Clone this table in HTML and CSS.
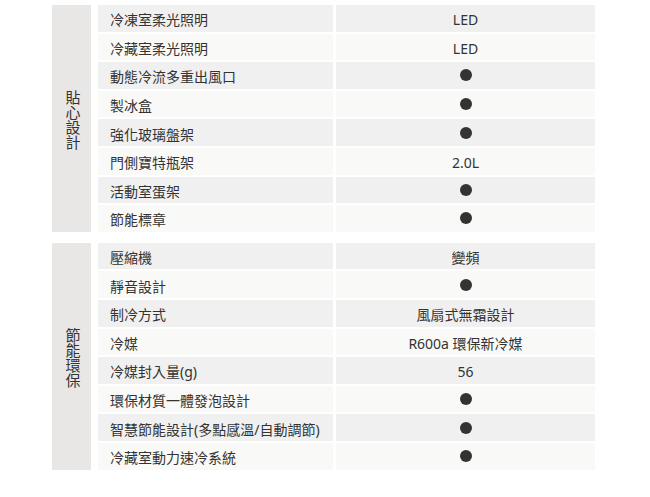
FILE: index.html
```html
<!DOCTYPE html>
<html lang="zh-Hant">
<head>
<meta charset="utf-8">
<link rel="stylesheet" href="styles.css">
</head>
<body>
<div class="spec">
  <section class="group">
    <div class="cat"><span>貼心設計</span></div>
    <div class="rows">
      <div class="row odd"><div class="name">冷凍室柔光照明</div><div class="val">LED</div></div>
      <div class="row even"><div class="name">冷藏室柔光照明</div><div class="val">LED</div></div>
      <div class="row odd"><div class="name">動態冷流多重出風口</div><div class="val"><i class="dot"></i></div></div>
      <div class="row even"><div class="name">製冰盒</div><div class="val"><i class="dot"></i></div></div>
      <div class="row odd"><div class="name">強化玻璃盤架</div><div class="val"><i class="dot"></i></div></div>
      <div class="row even"><div class="name">門側寶特瓶架</div><div class="val">2.0L</div></div>
      <div class="row odd"><div class="name">活動室蛋架</div><div class="val"><i class="dot"></i></div></div>
      <div class="row even"><div class="name">節能標章</div><div class="val"><i class="dot"></i></div></div>
    </div>
  </section>
  <section class="group">
    <div class="cat"><span>節能環保</span></div>
    <div class="rows">
      <div class="row odd"><div class="name">壓縮機</div><div class="val">變頻</div></div>
      <div class="row even"><div class="name">靜音設計</div><div class="val"><i class="dot"></i></div></div>
      <div class="row odd"><div class="name">制冷方式</div><div class="val">風扇式無霜設計</div></div>
      <div class="row even"><div class="name">冷媒</div><div class="val">R600a 環保新冷媒</div></div>
      <div class="row odd"><div class="name">冷媒封入量(g)</div><div class="val">56</div></div>
      <div class="row even"><div class="name">環保材質一體發泡設計</div><div class="val"><i class="dot"></i></div></div>
      <div class="row odd"><div class="name">智慧節能設計(多點感溫/自動調節)</div><div class="val"><i class="dot"></i></div></div>
      <div class="row even"><div class="name">冷藏室動力速冷系統</div><div class="val"><i class="dot"></i></div></div>
    </div>
  </section>
</div>
</body>
</html>
```

FILE: styles.css
```css
html, body {
  margin: 0;
  padding: 0;
  background: #ffffff;
}
body {
  font-family: "Noto Sans", "Noto Sans CJK TC", sans-serif;
  font-size: 14px;
  color: #333333;
}
.spec {
  padding: 5px 0 0 52px;
  display: flex;
  flex-direction: column;
  gap: 11px;
}
.group {
  display: flex;
  gap: 7px;
}
.cat {
  width: 39px;
  padding-left: 3px;
  box-sizing: border-box;
  background: #e9e7e5;
  display: flex;
  align-items: center;
  justify-content: center;
}
.cat span {
  writing-mode: vertical-rl;
  font-family: "Noto Sans CJK TC", sans-serif;
  font-size: 15px;
  line-height: 15px;
  color: #333;
  padding-top: 3px;
}
.rows {
  display: flex;
  flex-direction: column;
  gap: 2px;
}
.row {
  display: flex;
  gap: 3px;
  height: 26.6px;
}
.name {
  width: 223px;
  padding: 4px 0 0 12px;
  display: flex;
  align-items: center;
  line-height: 1;
}
.val {
  width: 259px;
  padding-top: 4px;
  box-sizing: border-box;
  display: flex;
  align-items: center;
  justify-content: center;
  line-height: 1;
}
.val .dot { margin-top: -4px; }
.odd .name, .odd .val { background: #f0f0f0; }
.even .name, .even .val { background: #f9f9f7; }
.dot {
  display: block;
  width: 12px;
  height: 12px;
  border-radius: 50%;
  background: #333333;
}
```
